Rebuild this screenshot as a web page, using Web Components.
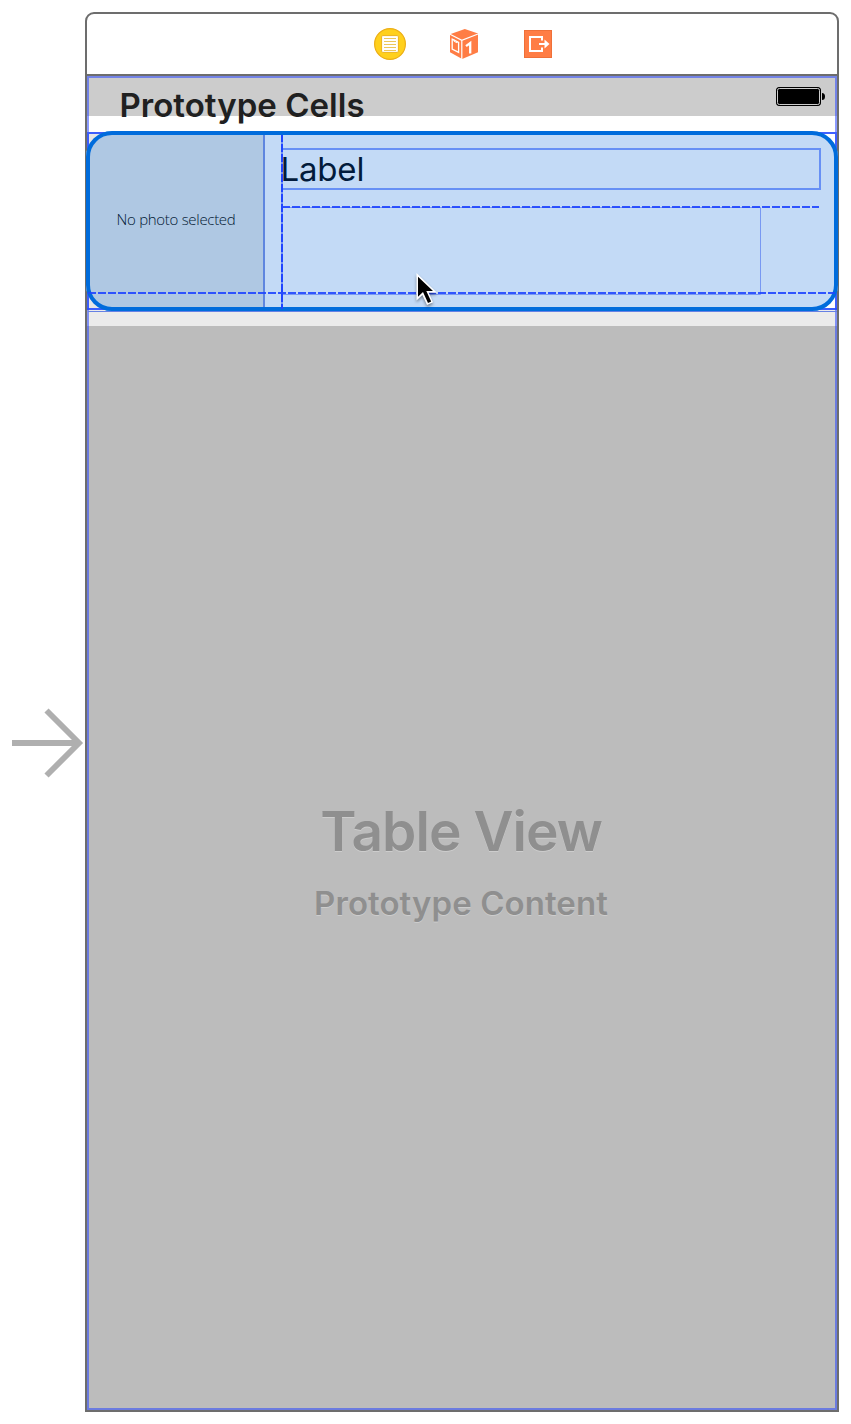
<!DOCTYPE html>
<html lang="en"><head><meta charset="utf-8"><title>Storyboard</title>
<style>html,body{margin:0;background:#fff}body{width:851px;height:1424px;overflow:hidden}</style></head><body>
<story-board><scene-frame>
<scene-dock slot="dock"></scene-dock>
<section-header slot="content">Prototype Cells</section-header>
<table-cell slot="content"><span slot="photo">No photo selected</span><span slot="label">Label</span></table-cell>
<table-placeholder slot="content"><span slot="title">Table View</span><span slot="subtitle">Prototype Content</span></table-placeholder>
</scene-frame></story-board>
<script>
function define(name, html) {
  const t = document.createElement('template');
  t.innerHTML = html;
  customElements.define(name, class extends HTMLElement {
    constructor() {
      super();
      this.attachShadow({mode: 'open'}).append(t.content.cloneNode(true));
    }
  });
}
define('story-board', `<style>
:host{display:flex;box-sizing:border-box;width:851px;height:1424px;padding:12px 0 0 12px;font-family:Inter,"Liberation Sans",sans-serif}
entry-arrow{margin-top:696px}
</style><entry-arrow></entry-arrow><slot></slot>`);
define('entry-arrow', `<style>:host{display:block;width:73px;height:70px;flex:none}svg{display:block}</style>
<svg width="73" height="70" viewBox="0 0 73 70"><path d="M0 35H67M34.5 2.5L67 35L34.5 67.5" fill="none" stroke="#afafaf" stroke-width="5.8"/></svg>`);
define('scene-frame', `<style>
:host{display:flex;flex-direction:column;box-sizing:border-box;width:754px;height:1400px;border:2px solid #6d6d6d;border-radius:9px 9px 0 0;flex:none}
.dock{height:60px;border-bottom:2px solid #6d6d6d;flex:none}
.view{position:relative;flex:1;display:flex;flex-direction:column}
.view::after{content:"";position:absolute;inset:0;border:2px solid rgba(32,64,255,.52);pointer-events:none}
</style><div class="dock"><slot name="dock"></slot></div><div class="view"><slot name="content"></slot></div>`);
define('scene-dock', `<style>:host{display:flex;box-sizing:border-box;height:60px;align-items:center;justify-content:center;gap:40px;padding-left:4px}svg{display:block}</style>
<svg width="34" height="34" viewBox="0 0 34 34"><circle cx="17" cy="17" r="15.4" fill="#ffd01c" stroke="#ecae16" stroke-width="1.2"/><rect x="8.6" y="8.6" width="16.8" height="16.8" rx="1.2" fill="#fff" stroke="#ecb21d" stroke-width="1"/><path d="M11 11.5H23M11 14.5H23M11 17.5H23M11 20.5H23M11 23.5H23" stroke="#edc75c" stroke-width="1"/></svg>
<svg width="34" height="34" viewBox="0 0 34 34"><path d="M3 7.2L17.8 2L31 6.5V25.3L15.2 32L3 25.2Z" fill="#ff7d45"/><path d="M3 7.2L14.8 13.4L31 7M14.8 13.4V32" fill="none" stroke="#fff" stroke-width="1.2"/><path d="M5.2 12.2L11.6 15.4V25.4L5.2 22Z" fill="none" stroke="#fff" stroke-width="1.3"/><path d="M7 12.5V14.3L10 15.8V14.3" fill="none" stroke="#fff" stroke-width=".9"/><path d="M19 19.2L23.2 16V26.5" fill="none" stroke="#fff" stroke-width="2.3"/></svg>
<svg width="34" height="34" viewBox="0 0 34 34"><rect x="3.5" y="3.5" width="27" height="27" fill="#ff7d45" stroke="#ef7039"/><path d="M21 13.5V10H9V24H21V20.5M18 17H25" fill="none" stroke="#fff" stroke-width="2"/><path d="M23.5 12.5L28.5 17L23.5 21.5Z" fill="#fff"/></svg>`);
define('section-header', `<style>
:host{display:grid;grid-template-columns:1fr auto;height:56px;flex:none;background:linear-gradient(#ccc 40px,#fff 40px);color:#202020}
.t{padding:9px 0 0 32.5px;font-size:33px;line-height:40px;font-weight:600;letter-spacing:.03px;white-space:nowrap}
.b{padding:11px 11px 0 0}svg{display:block}
</style><div class="t"><slot></slot></div><div class="b"><svg width="50" height="19" viewBox="0 0 50 19"><rect x=".5" y=".5" width="44" height="18" rx="2.5" fill="#000" stroke="#000"/><rect x="1.5" y="1.5" width="42" height="16" rx="1.8" fill="none" stroke="#ccc" stroke-width="1"/><path d="M46 6Q49 6 49 9.5T46 13Z"/></svg></div>`);
define('table-cell', `<style>
:host{display:block;position:relative;width:750px;height:176px;flex:none;background:linear-gradient(90deg,#e6e6e6 50%,#fff 50%);z-index:1}
.shape{position:absolute;left:-1px;top:-1px;box-sizing:border-box;width:752px;height:180px;border-radius:26px;overflow:hidden;background:#c3daf6;display:grid;grid-template-columns:179px 1fr}
.photo{border-right:2px solid #5f86df;background:#afc8e3;display:grid;place-items:center;color:#021833;font:300 15px/20px "Open Sans","Noto Sans",sans-serif;letter-spacing:-.3px;white-space:nowrap}
.photo span{transform:translate(1.5px,-2px)}
.body{padding:17px 17px 0 16px}
.label{box-sizing:border-box;height:42px;border:2px solid #6790f5;border-left:0;color:#021b3c;font-size:33px;line-height:38px;letter-spacing:-.15px;text-indent:-.6px}
svg{position:absolute;left:-2px;top:-3px;overflow:visible}
</style>
<div class="shape"><div class="photo"><span><slot name="photo"></slot></span></div><div class="body"><div class="label"><slot name="label"></slot></div></div></div>
<svg width="754" height="183" viewBox="85 129 754 183"><g fill="none">
<path d="M282 207.5H760.5V294.5H282" stroke="#7898f2"/>
<path d="M88 134V308M836 134V308M87 133H837M87 309H837" stroke="#1f45ff" stroke-width="2" stroke-opacity=".85"/>
<rect x="88" y="133" width="748" height="176" rx="24" stroke="#006cdc" stroke-width="4"/>
<path d="M88 311.5H837" stroke="#6681e4"/>
<path d="M282 135V309" stroke="#7596f5" stroke-width="2"/>
<path d="M282 135V309" stroke="#1f45ff" stroke-width="2" stroke-dasharray="8 2" stroke-dashoffset="1"/>
<path d="M282 207H819M88 293H835" stroke="#1f45ff" stroke-opacity=".9" stroke-width="2" stroke-dasharray="8 2"/></g>
<g style="filter:drop-shadow(0 2px 1.5px #0006)"><path d="M416.5 273V300.5L422.4 295L427 305L433 302.2L428.7 292.8H437Z" fill="#fff"/><path d="M418 276.8V296.8L423 292L428 303L431.2 301.5L426.3 291H433Z" fill="#000"/></g></svg>`);
define('table-placeholder', `<style>
:host{display:flex;flex:1;flex-direction:column;align-items:center;box-sizing:border-box;padding:490px 2px 0 0;background:linear-gradient(#ebebeb 18px,#bcbcbc 18px);color:#8f8f8f;font-weight:600;text-shadow:0 1px 0 #cdcdcd;white-space:nowrap}
.a{font-size:55px;line-height:66px;letter-spacing:-.95px}
.b{margin-top:19px;font-size:33px;line-height:40px;letter-spacing:.07px}
</style><div class="a"><slot name="title"></slot></div><div class="b"><slot name="subtitle"></slot></div>`);
</script></body></html>
